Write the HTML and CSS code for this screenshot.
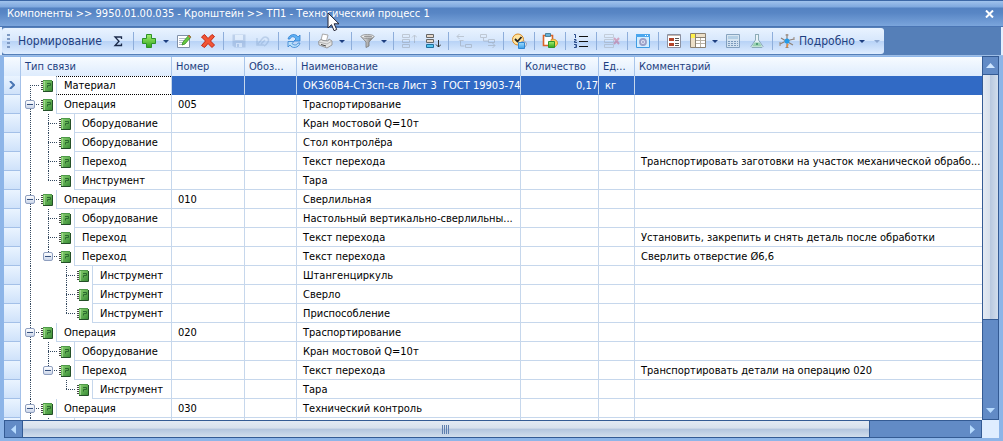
FILE: index.html
```html
<!DOCTYPE html>
<html lang="ru">
<head>
<meta charset="utf-8">
<title>Компоненты</title>
<link rel="stylesheet" href="styles.css">
</head>
<body>
<svg class="defs" aria-hidden="true">
  <defs>
    <linearGradient id="leaf" x1="0" y1="0" x2="1" y2="1"><stop offset="0" stop-color="#86cf6c"/><stop offset="1" stop-color="#3b8d38"/></linearGradient>
    <linearGradient id="plus" x1="0" y1="0" x2="0" y2="1"><stop offset="0" stop-color="#a5f070"/><stop offset="1" stop-color="#2fa51c"/></linearGradient>
    <linearGradient id="sky" x1="0" y1="0" x2="0" y2="1"><stop offset="0" stop-color="#9ddcff"/><stop offset="1" stop-color="#3d9fe8"/></linearGradient>
    <linearGradient id="metal" x1="0" y1="0" x2="1" y2="0"><stop offset="0" stop-color="#fff"/><stop offset="1" stop-color="#666"/></linearGradient>
    <symbol id="book" viewBox="0 0 12 12">
      <path d="M2 1h9v10H2z" fill="url(#leaf)"/>
      <path d="M2 .5h9" stroke="#4f9a4a"/>
      <path d="M3.500 1v10" stroke="#a9dd9a" opacity=".8"/>
      <path d="M6 3.500h3.500v2H6.500v2" stroke="#2b6a2f" fill="none"/>
      <path d="M0 1.500h2M0 3.500h2M0 5.500h2M0 7.500h2M0 9.500h2" stroke="#444"/>
      <path d="M11.500 1v10.500H2" stroke="#234f27" fill="none"/>
    </symbol>
  </defs>
</svg>
<main class="window">
  <header class="titlebar">
    <h1 class="title">Компоненты &gt;&gt; 9950.01.00.035 - Кронштейн &gt;&gt; ТП1 - Техногический процесс 1</h1>
    <button class="close" type="button" aria-label="Закрыть"><svg width="9" height="8" viewBox="0 0 9 8"><path d="M1 .5l7 7M8 .5l-7 7" stroke="#fff" stroke-width="2"/></svg></button>
    <svg class="pointer" width="13" height="20" viewBox="0 0 13 20"><path d="M1 1v15l3.500-3.300 2.600 6 2.600-1.200-2.600-5.700H12z" fill="#fff" stroke="#223"/></svg>
  </header>

  <div class="toolbar-row">
    <div class="toolbar" role="toolbar">
      <span class="grip"></span>
      <button class="tool text" type="button">Нормирование</button>
      <button class="tool sigma" type="button" aria-label="Сумма"><svg width="16" height="16"><path d="M11.500 6V4H5l4 4.200L5 12.500h6.500V10.500" fill="none" stroke="#1b2a4a" stroke-width="1.300"/></svg></button>
      <div class="group">
        <button class="tool" type="button" aria-label="Добавить"><svg width="16" height="16"><path d="M5.500 1.500h5v4h4v5h-4v4h-5v-4h-4v-5h4z" fill="url(#plus)" stroke="#2c9226"/></svg></button>
        <button class="drop" type="button" aria-label="Варианты"></button>
        <button class="tool" type="button" aria-label="Изменить"><svg width="16" height="16"><path d="M1.500 2.500h12v12h-12z" fill="#fff" stroke="#8090a8"/><path d="M3 5.500h7M3 7.500h6M3 9.500h5M3 11.500h3" stroke="#b4bccb"/><path d="M6 12l1-3 6-7 2 2-6 7z" fill="#67c83f" stroke="#328c28" stroke-width=".8"/><path d="M12 3l1-1 2 2-1 1z" fill="#e65a4a"/></svg></button>
        <button class="tool" type="button" aria-label="Удалить"><svg width="16" height="16"><path d="M4.500 1.500l3.500 4L12 1.500l2.500 2L10.500 8l4 4-2.500 2.500-4-4-3.500 4-3-2L5.500 8l-4-4z" fill="#f25535" stroke="#c42713"/></svg></button>
      </div>
      <div class="group">
        <button class="tool" type="button" disabled aria-label="Сохранить"><svg width="16" height="16"><path d="M1.500 1.500h13v13h-11l-2-2z" fill="#7795c2"/><path d="M4 2h8v5H4zM5 10h6v4H5z" fill="#eef4fc"/><path d="M6 11h2v3H6z" fill="#7795c2"/></svg></button>
        <button class="tool" type="button" disabled aria-label="Отменить"><svg width="16" height="16"><path d="M2 5v7h7M3 11l4-5c3-4 8-1 6 3-1 2-2 3-4 4M6 11l4-4" fill="none" stroke="#7192bf" stroke-width="1.500"/></svg></button>
      </div>
      <div class="group">
        <button class="tool" type="button" aria-label="Обновить"><svg width="16" height="16"><path d="M2 6c1-5 8-6 10-2l2-2v6H8l2-2C8 3 5 3 4 6z" fill="#5fb2f5" stroke="#3480d0" stroke-width=".8"/><path d="M14 10c-1 5-8 6-10 2l-2 2V8.500h6l-2 2c2 2 5 2 6-.5z" fill="#b7dffa" stroke="#3480d0" stroke-width=".8"/></svg></button>
      </div>
      <div class="group">
        <button class="tool" type="button" aria-label="Печать"><svg width="16" height="16"><path d="M4 7l1.500-6L11 2l-1.500 6z" fill="#fff" stroke="#aaa"/><path d="M1.500 8.500L4 6.500l2 1 5 .5 1-2 3 2v4l-5 3-8-3z" fill="#e4e4e4" stroke="#8a8a8a" stroke-width=".8"/><path d="M2 9l8 2 5-3" fill="none" stroke="#aaa" stroke-width=".8"/><path d="M4 11.500l5 1.500" stroke="#444"/></svg></button>
        <button class="drop" type="button" aria-label="Варианты печати"></button>
      </div>
      <div class="group">
        <button class="tool" type="button" aria-label="Фильтр"><svg width="16" height="16"><path d="M2 3.500l5 5.500v5.500l3-1.500V9l5-5.500z" fill="url(#metal)" stroke="#777" stroke-width=".8"/><ellipse cx="8.500" cy="3.500" rx="6.500" ry="2" fill="#eee" stroke="#888" stroke-width=".8"/><ellipse cx="9" cy="3.500" rx="4" ry="1" fill="#999"/></svg></button>
        <button class="drop" type="button" aria-label="Варианты фильтра"></button>
      </div>
      <div class="group">
        <button class="tool" type="button" disabled aria-label="Вверх"><svg width="16" height="16"><path d="M1.500 1.500h7v3h-7zM1.500 6.500h7v3h-7zM1.500 11.500h7v3h-7zM13.500 10V2M11 4.500L13.500 2 16 4.500" fill="none" stroke="#777"/></svg></button>
        <button class="tool" type="button" aria-label="Вниз"><svg width="16" height="16"><path d="M1.500 1.500h7v3h-7zM1.500 6.500h7v3h-7z" fill="#e8d9cb" stroke="#666"/><path d="M1.500 11.500h7v3h-7z" fill="#55c5ef" stroke="#1e6f9e"/><path d="M13.500 7v7M11 11.500l2.500 2.500 2.500-2.500" fill="none" stroke="#333"/></svg></button>
      </div>
      <div class="group">
        <button class="tool" type="button" disabled aria-label="Повысить уровень"><svg width="16" height="16"><path d="M1 3.500h7M3.500 1L1 3.500 3.500 6M4.500 7v6h4M3.500 7.500h4M9.500 11.500h6v3h-6z" fill="none" stroke="#777"/></svg></button>
        <button class="tool" type="button" disabled aria-label="Понизить уровень"><svg width="16" height="16"><path d="M.5 1.500h6v3h-6zM3.500 5v3h5M8.500 6.500h6v3h-6zM8 12.500h7M12.500 10l2.500 2.500-2.500 2.500" fill="none" stroke="#777"/></svg></button>
      </div>
      <div class="group">
        <button class="tool" type="button" aria-label="Проверить"><svg width="16" height="16"><circle cx="7" cy="6.500" r="5.500" fill="#ffe4a0" stroke="#d88a26"/><path d="M4 6l2.500 2.500L10.500 4" fill="none" stroke="#222" stroke-width="1.800"/><path d="M10 9l3.500-1 2.500 3-2 3h-4z" fill="#d9dbe4" stroke="#8e97ad" stroke-width=".8"/><path d="M7.500 9.500h6v6h-6z" fill="url(#sky)" stroke="#2f86d2"/></svg></button>
      </div>
      <div class="group">
        <button class="tool" type="button" aria-label="Вставить"><svg width="16" height="16"><path d="M1.500 2.500h9v10h-9z" fill="#fff" stroke="#d9652a" stroke-width="1.600"/><path d="M3.500 .5h5v3h-5z" fill="#68b2da" stroke="#347590" stroke-width=".8"/><path d="M9 6.500c4-1 7 1 6.500 4.500l-2.500 3H9z" fill="#ffd057" stroke="#c98a24" stroke-width=".8"/><path d="M6.500 8.500h6v6h-6z" fill="url(#plus)" stroke="#2d942b"/></svg></button>
      </div>
      <div class="group">
        <button class="tool" type="button" aria-label="Нумерация"><svg width="16" height="16"><path d="M6 3.500h9M6 8.500h9M6 13.500h9" stroke="#111"/><path d="M1 1.500h1.500V5M1 6.500h2v1.500H1.500v1.500H4M1 11.500h2.500v3H1M2 13h1" fill="none" stroke="#2b4d8c"/></svg></button>
      </div>
      <div class="group">
        <button class="tool" type="button" disabled aria-label="Удалить строку"><svg width="16" height="16"><path d="M.5 1.500h9v3h-9zM.5 6.500h9v3h-9zM.5 11.500h9v3h-9z" fill="none" stroke="#888"/><path d="M10 5l5 6M15 5l-5 6" stroke="#c01040" stroke-width="2"/></svg></button>
      </div>
      <div class="group">
        <button class="tool" type="button" aria-label="Настройки окна"><svg width="16" height="16"><path d="M1.500 1.500h13v13h-13z" fill="#d3edff" stroke="#3f9be3"/><path d="M1 1h14v3H1z" fill="#4aa6ee"/><path d="M10 2.500h1M12 2.500h1" stroke="#fff"/><circle cx="8" cy="9" r="3" fill="#dfe3f4" stroke="#9a9fc6" stroke-width="1.800"/><circle cx="8" cy="9" r="1" fill="#9a9fc6"/></svg></button>
      </div>
      <div class="group">
        <button class="tool" type="button" aria-label="Карточка"><svg width="16" height="16"><path d="M1.500 1.500h13v13h-13z" fill="#fff" stroke="#8b90a0"/><path d="M2 2.500h12" stroke="#c6b6ac"/><path d="M3 5h5v3H3zM3 10h5v3H3z" fill="#b3442b"/><path d="M9 5.500h4M9 7.500h4M9 10.500h4M9 12.500h4" stroke="#555"/></svg></button>
        <button class="tool" type="button" aria-label="Таблица"><svg width="16" height="16"><path d="M.5 .5h15v14H.5z" fill="#fff" stroke="#8a8172"/><path d="M6 1h9v3H6zM1 5h4v9H1z" fill="#ecdfc8"/><path d="M5.500 1v13M1 4.500h14" stroke="#8a8172"/><path d="M6 7.500h9M6 10.500h9M10.500 5v9" stroke="#b9b2a5"/><path d="M1 1h4v4H1z" fill="#fff04a"/></svg></button>
        <button class="drop" type="button" aria-label="Варианты таблицы"></button>
        <button class="tool muted" type="button" aria-label="Калькулятор"><svg width="16" height="16"><path d="M1.500 1.500h13v13h-13z" fill="#d6e4ee" stroke="#6b8cab"/><path d="M3 3h10v3H3z" fill="#a7c7de"/><path d="M3 8.500h10M3 10.500h10M3 12.500h10" stroke="#6686a8" stroke-dasharray="2 1"/></svg></button>
        <button class="tool muted" type="button" aria-label="Материалы"><svg width="16" height="16"><path d="M6 1.500h4M6.500 2v5L2 13.500l1 1h10l1-1L9.500 7V2" fill="#eef7f5" stroke="#7497a2"/><path d="M5.500 9.500h5l2.500 4H3z" fill="#8bcf9a"/><path d="M7 10h2v2H7z" fill="#2e8a51"/></svg></button>
      </div>
      <div class="group">
        <button class="tool detail" type="button"><svg width="16" height="16"><path d="M8 1v14M1 11l4-2 6-2 4-1M2 5l5 3 7 4" stroke="#8d8078" stroke-width="1.200" fill="none"/><path d="M6.500 2h3M6.500 14.500h3M1 9v4M15 4v3" stroke="#9a8879"/><circle cx="8" cy="8" r="2.500" fill="#219bea"/><path d="M9 11l-1 3" stroke="#e98d3e" stroke-width="1.500"/></svg><span>Подробно</span><i class="caret"></i></button>
      </div>
      <button class="more" type="button" aria-label="Ещё"></button>
    </div>
  </div>

  <section class="viewer">
    <div class="sheet">
    <table class="grid">
      <colgroup><col class="c-mark"><col class="c-type"><col class="c-num"><col class="c-code"><col class="c-name"><col class="c-qty"><col class="c-unit"><col></colgroup>
      <thead><tr><th></th><th>Тип связи</th><th>Номер</th><th>Обоз...</th><th>Наименование</th><th>Количество</th><th>Ед...</th><th>Комментарий</th></tr></thead>
      <tbody>
        <tr class="selected"><td class="mark"><svg width="6" height="8" viewBox="0 0 6 8"><path d="M1 0l4 4-4 4" fill="none" stroke="#4a76b4" stroke-width="2"/></svg></td><td class="tree"><div class="node"><span class="g first"></span><svg class="book"><use href="#book"/></svg><span class="label">Материал</span></div></td><td></td><td></td><td>ОК360В4-Ст3сп-св Лист 3&nbsp; ГОСТ 19903-74</td><td class="qty">0,17</td><td>кг</td><td></td></tr>
        <tr><td></td><td class="tree"><div class="node"><span class="g tee"><button class="fold" type="button" aria-label="Свернуть"></button></span><svg class="book"><use href="#book"/></svg><span class="label">Операция</span></div></td><td>005</td><td></td><td>Траспортирование</td><td></td><td></td><td></td></tr>
        <tr><td></td><td class="tree"><div class="node"><span class="g line"></span><span class="g tee"></span><svg class="book"><use href="#book"/></svg><span class="label">Оборудование</span></div></td><td></td><td></td><td>Кран мостовой Q=10т</td><td></td><td></td><td></td></tr>
        <tr><td></td><td class="tree"><div class="node"><span class="g line"></span><span class="g tee"></span><svg class="book"><use href="#book"/></svg><span class="label">Оборудование</span></div></td><td></td><td></td><td>Стол контролёра</td><td></td><td></td><td></td></tr>
        <tr><td></td><td class="tree"><div class="node"><span class="g line"></span><span class="g tee"></span><svg class="book"><use href="#book"/></svg><span class="label">Переход</span></div></td><td></td><td></td><td>Текст перехода</td><td></td><td></td><td>Транспортировать заготовки на участок механической обрабо...</td></tr>
        <tr><td></td><td class="tree"><div class="node"><span class="g line"></span><span class="g elbow"></span><svg class="book"><use href="#book"/></svg><span class="label">Инструмент</span></div></td><td></td><td></td><td>Тара</td><td></td><td></td><td></td></tr>
        <tr><td></td><td class="tree"><div class="node"><span class="g tee"><button class="fold" type="button" aria-label="Свернуть"></button></span><svg class="book"><use href="#book"/></svg><span class="label">Операция</span></div></td><td>010</td><td></td><td>Сверлильная</td><td></td><td></td><td></td></tr>
        <tr><td></td><td class="tree"><div class="node"><span class="g line"></span><span class="g tee"></span><svg class="book"><use href="#book"/></svg><span class="label">Оборудование</span></div></td><td></td><td></td><td>Настольный вертикально-сверлильны...</td><td></td><td></td><td></td></tr>
        <tr><td></td><td class="tree"><div class="node"><span class="g line"></span><span class="g tee"></span><svg class="book"><use href="#book"/></svg><span class="label">Переход</span></div></td><td></td><td></td><td>Текст перехода</td><td></td><td></td><td>Установить, закрепить и снять деталь после обработки</td></tr>
        <tr><td></td><td class="tree"><div class="node"><span class="g line"></span><span class="g elbow"><button class="fold" type="button" aria-label="Свернуть"></button></span><svg class="book"><use href="#book"/></svg><span class="label">Переход</span></div></td><td></td><td></td><td>Текст перехода</td><td></td><td></td><td>Сверлить отверстие Ø6,6</td></tr>
        <tr><td></td><td class="tree"><div class="node"><span class="g line"></span><span class="g"></span><span class="g tee"></span><svg class="book"><use href="#book"/></svg><span class="label">Инструмент</span></div></td><td></td><td></td><td>Штангенциркуль</td><td></td><td></td><td></td></tr>
        <tr><td></td><td class="tree"><div class="node"><span class="g line"></span><span class="g"></span><span class="g tee"></span><svg class="book"><use href="#book"/></svg><span class="label">Инструмент</span></div></td><td></td><td></td><td>Сверло</td><td></td><td></td><td></td></tr>
        <tr><td></td><td class="tree"><div class="node"><span class="g line"></span><span class="g"></span><span class="g elbow"></span><svg class="book"><use href="#book"/></svg><span class="label">Инструмент</span></div></td><td></td><td></td><td>Приспособление</td><td></td><td></td><td></td></tr>
        <tr><td></td><td class="tree"><div class="node"><span class="g tee"><button class="fold" type="button" aria-label="Свернуть"></button></span><svg class="book"><use href="#book"/></svg><span class="label">Операция</span></div></td><td>020</td><td></td><td>Траспортирование</td><td></td><td></td><td></td></tr>
        <tr><td></td><td class="tree"><div class="node"><span class="g line"></span><span class="g tee"></span><svg class="book"><use href="#book"/></svg><span class="label">Оборудование</span></div></td><td></td><td></td><td>Кран мостовой Q=10т</td><td></td><td></td><td></td></tr>
        <tr><td></td><td class="tree"><div class="node"><span class="g line"></span><span class="g elbow"><button class="fold" type="button" aria-label="Свернуть"></button></span><svg class="book"><use href="#book"/></svg><span class="label">Переход</span></div></td><td></td><td></td><td>Текст перехода</td><td></td><td></td><td>Транспортировать детали на операцию 020</td></tr>
        <tr><td></td><td class="tree"><div class="node"><span class="g line"></span><span class="g"></span><span class="g elbow"></span><svg class="book"><use href="#book"/></svg><span class="label">Инструмент</span></div></td><td></td><td></td><td>Тара</td><td></td><td></td><td></td></tr>
        <tr><td></td><td class="tree"><div class="node"><span class="g tee"><button class="fold" type="button" aria-label="Свернуть"></button></span><svg class="book"><use href="#book"/></svg><span class="label">Операция</span></div></td><td>030</td><td></td><td>Технический контроль</td><td></td><td></td><td></td></tr>
        <tr><td></td><td class="tree"><div class="node"><span class="g line"></span><span class="g line"></span><span class="book"></span><span class="label"></span></div></td><td></td><td></td><td></td><td></td><td></td><td></td></tr>
      </tbody>
    </table>
    </div>
    <div class="scroll vertical">
      <button class="arrow" type="button" aria-label="Прокрутить вверх"><svg width="9" height="5"><path d="M0 5l4.500-5L9 5z" fill="#cfe6ff"/></svg></button>
      <div class="track"><div class="thumb"></div></div>
      <button class="arrow" type="button" aria-label="Прокрутить вниз"><svg width="9" height="5"><path d="M0 0l4.500 5L9 0z" fill="#b8dcff"/></svg></button>
    </div>
    <div class="scroll horizontal">
      <button class="arrow" type="button" aria-label="Прокрутить влево"><svg width="5" height="9"><path d="M5 0L0 4.500 5 9z" fill="#b8dcff"/></svg></button>
      <div class="track"><div class="thumb"><span class="ridges"></span></div></div>
      <button class="arrow" type="button" aria-label="Прокрутить вправо"><svg width="5" height="9"><path d="M0 0l5 4.500L0 9z" fill="#b8dcff"/></svg></button>
    </div>
    <div class="corner"></div>
  </section>
</main>
</body>
</html>
```

FILE: styles.css
```css
* { box-sizing: border-box; }

body {
  margin: 0;
  font-family: "DejaVu Sans Condensed", "DejaVu Sans", "Noto Sans", sans-serif;
  font-size: 11px;
  color: #000;
}

button {
  margin: 0;
  padding: 0;
  border: 0;
  background: none;
  font: inherit;
  color: inherit;
}

svg { display: block; flex: none; }
.defs { position: absolute; width: 0; height: 0; }

.window {
  display: flex;
  flex-direction: column;
  height: 100vh;
  overflow: hidden;
  background: #d9e9fc;
}

.titlebar {
  position: relative;
  display: flex;
  align-items: center;
  justify-content: space-between;
  flex: none;
  height: 27px;
  padding: 1px 9px 0 7px;
  border-top: 1px solid #3c67a6;
  border-bottom: 1px solid #4a75b4;
  background: linear-gradient(#a0c2ec 0, #7fa8de 6px, #5482c2 7px, #5886c5 12px, #7ba5dc 25px);
}

.title {
  margin: 0;
  font-size: 11px;
  font-weight: normal;
  line-height: 16px;
  white-space: nowrap;
  color: #fff;
}

.pointer { position: absolute; left: 327px; top: 11px; }

.toolbar-row {
  flex: none;
  height: 29px;
  padding: 1px 2px 2px;
  border-bottom: 1px solid #9dbde6;
  background: linear-gradient(90deg, #e4f0ff 0 2px, #557fb8 2px calc(100% - 2px), #e4f0ff calc(100% - 2px));
}

.toolbar {
  display: flex;
  align-items: center;
  width: max-content;
  height: 26px;
  padding-left: 5px;
  border-radius: 3px;
  background: linear-gradient(#e9f3ff, #d7e7fc 48%, #b7d2f6 50%, #dfedff);
  font-size: 12px;
  color: #1e3f80;
}

.grip {
  width: 3px;
  height: 14px;
  margin-right: 7px;
  background: repeating-linear-gradient(#7c98c2 0 2px, transparent 2px 4px);
}

.group {
  display: flex;
  align-items: center;
  gap: 1px;
  height: 18px;
  padding: 0 4px 0 3px;
  border-left: 1px solid #8eaedb;
}

.tool {
  display: flex;
  align-items: center;
  justify-content: center;
  width: 23px;
  height: 22px;
}

.tool:disabled { opacity: .3; }
.tool.muted { opacity: .75; }
.tool.text { width: 86px; }
.tool.sigma { width: 30px; }
.tool.detail { width: auto; gap: 4px; padding-left: 3px; }

.drop {
  display: flex;
  justify-content: center;
  width: 10px;
}

.drop::before, .caret {
  content: "";
  border: 3px solid transparent;
  border-top-color: #1e3f80;
  border-bottom: 0;
}

.more {
  width: 6px;
  margin: 0 4px 0 5px;
  border: 3px solid transparent;
  border-top-color: #8ba6cf;
  border-bottom: 0;
}

.viewer {
  display: grid;
  grid-template: minmax(0, 1fr) 18px / minmax(0, 1fr) 17px;
  flex: 1;
  min-height: 0;
  border-style: solid;
  border-width: 0 4px 3px;
  border-color: #8db5e8;
}

.sheet {
  min-width: 0;
  overflow: hidden;
  border-top: 1px solid #8db5e8;
  background: #fff;
}

.grid {
  width: 100%;
  table-layout: fixed;
  border-collapse: separate;
  border-spacing: 0;
}

.c-mark { width: 17px; }
.c-type { width: 151px; }
.c-num { width: 73px; }
.c-code { width: 52px; }
.c-name { width: 224px; }
.c-qty { width: 78px; }
.c-unit { width: 36px; }

.grid th {
  height: 19px;
  padding: 0 0 0 4px;
  border-right: 1px solid #a9c5ea;
  background: linear-gradient(#f7fbff, #deecfd);
  font-weight: normal;
  line-height: 18px;
  text-align: left;
  white-space: nowrap;
  overflow: hidden;
  color: #1e3f80;
}

.grid td {
  height: 19px;
  padding: 2px 0 0 6px;
  border-right: 1px solid #c6d7ec;
  border-bottom: 1px solid #c6d7ec;
  line-height: 16px;
  white-space: nowrap;
  overflow: hidden;
}

.grid th:last-child, .grid td:last-child { border-right: 0; }

.grid td:first-child {
  padding: 0;
  border-color: #a3c0e8;
  background: linear-gradient(#eaf4ff, #cfe2fa);
}

.grid .mark svg { margin: 0 auto; }
.grid .tree { padding: 0; border-bottom: 0; }
.grid .qty { padding-left: 0; text-align: right; }

.selected td:nth-child(n+3) {
  border-bottom-color: #316ac5;
  background: #316ac5;
  color: #fff;
}

.node {
  display: flex;
  align-items: center;
  height: 19px;
}

.g {
  --v: repeating-linear-gradient(#33485f 0 1px, transparent 1px 2px);
  --h: repeating-linear-gradient(90deg, #33485f 0 1px, transparent 1px 2px);
  display: flex;
  align-items: center;
  flex: none;
  width: 18px;
  height: 19px;
  padding-left: 4px;
  background-repeat: no-repeat;
}

.g.line { background-image: var(--v); background-size: 1px 19px; background-position: 9px 0; }
.g.tee { background-image: var(--v), var(--h); background-size: 1px 19px, 9px 1px; background-position: 9px 0, 9px 9px; }
.g.elbow { background-image: var(--v), var(--h); background-size: 1px 10px, 9px 1px; background-position: 9px 0, 9px 9px; }
.g.first { background-image: var(--v), var(--h); background-size: 1px 10px, 9px 1px; background-position: 9px 9px; }

.fold {
  display: flex;
  align-items: center;
  justify-content: center;
  width: 10px;
  height: 9px;
  border: 1px solid #8f9fbf;
  border-radius: 2px;
  background: linear-gradient(#fff, #cbd6ea);
}

.fold::before {
  content: "";
  width: 6px;
  height: 1px;
  background: #37517f;
}

.book {
  flex: none;
  width: 12px;
  height: 12px;
  margin: 0 3px 0 2px;
}

.label {
  flex: 1;
  height: 19px;
  padding: 2px 0 0 7px;
  border-left: 1px solid #c6d7ec;
  border-bottom: 1px solid #c6d7ec;
  line-height: 16px;
}

.selected .label {
  padding-top: 1px;
  border-top: 1px dotted #000;
  border-bottom: 1px dotted #000;
}

.scroll { display: flex; background: #628bc6; }
.track { flex: 1; min-width: 0; min-height: 0; }

.arrow {
  display: flex;
  align-items: center;
  justify-content: center;
  flex: none;
}

.vertical {
  flex-direction: column;
  border: 1px solid #345b94;
}

.vertical .arrow { height: 17px; }

.vertical .thumb {
  height: 75%;
  border: solid #345b94;
  border-width: 1px 0;
  background: linear-gradient(90deg, #e3eaf3, #d7e0ec 45%, #b9c9df 50%, #d2deec);
}

.horizontal { border: 1px solid #345b94; }
.horizontal .arrow { width: 17px; }

.horizontal .thumb {
  display: flex;
  align-items: center;
  justify-content: center;
  width: 90%;
  height: 100%;
  border: solid #345b94;
  border-width: 0 1px;
  background: linear-gradient(#e3eaf3, #d7e0ec 45%, #b3c5de 50%, #d2deec);
}

.ridges {
  width: 7px;
  height: 9px;
  background: repeating-linear-gradient(90deg, #5f7fae 0 1px, transparent 1px 2px);
}

.corner { background: #dfedff; }
```
